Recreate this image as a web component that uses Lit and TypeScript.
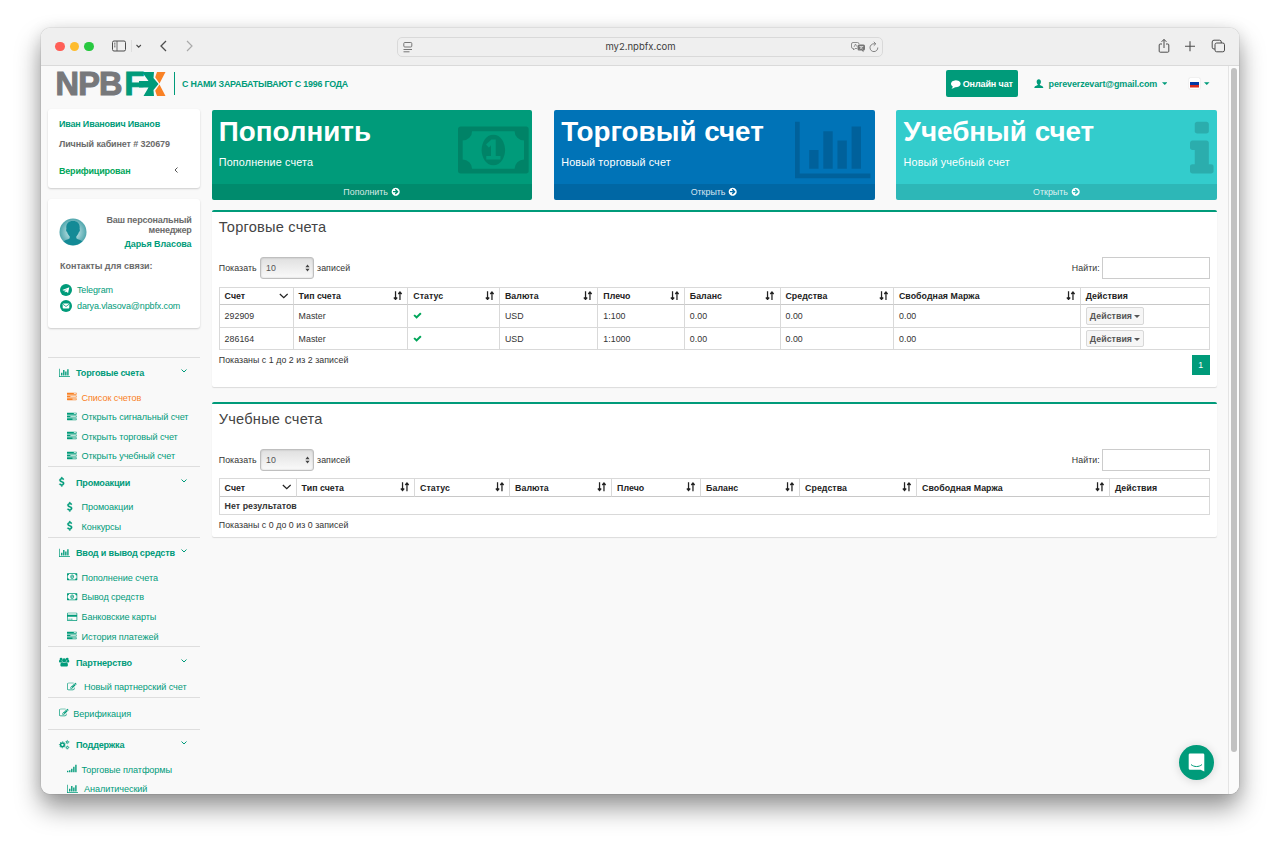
import { LitElement, html, css, svg } from "lit";
import { customElement, property } from "lit/decorators.js";

const rr = (x: number, top: number) => svg`<rect x=${x} y=${top} width="256" height=${1536 - top} rx="30"></rect>`;

/* name -> [viewBox width, drawing]; every glyph is 1792 units high */
const ICONS: Record<string, [number, unknown]> = {
  chart: [2048, svg`<path d="M640 896v512h-256v-512h256zm384-512v1024h-256v-1024h256zm1024 1152v128h-2048v-1536h128v1408h1920zm-640-896v768h-256v-768h256zm384-384v1152h-256v-1152h256z"></path>`],
  money: [1920, svg`<path d="M768 1152h384v-96h-128v-448h-114l-148 137 77 80q42-37 55-57h2v288h-128v96zm512-256q0 70-21 142t-59.5 134-101.5 101-138 39-138-39-101.5-101-59.5-134-21-142 21-142 59.5-134 101.5-101 138-39 138 39 101.5 101 59.5 134 21 142zm512 256v-512q-106 0-181-75t-75-181h-1152q0 106-75 181t-181 75v512q106 0 181 75t75 181h1152q0-106 75-181t181-75zm128-832v1152q0 26-19 45t-45 19h-1792q-26 0-45-19t-19-45v-1152q0-26 19-45t45-19h1792q26 0 45 19t19 45z"></path>`],
  info: [640, svg`<path d="M640 1344v128q0 26-19 45t-45 19h-512q-26 0-45-19t-19-45v-128q0-26 19-45t45-19h64v-384h-64q-26 0-45-19t-19-45v-128q0-26 19-45t45-19h384q26 0 45 19t19 45v576h64q26 0 45 19t19 45zm-128-1152v192q0 26-19 45t-45 19h-256q-26 0-45-19t-19-45v-192q0-26 19-45t45-19h256q26 0 45 19t19 45z"></path>`],
  tasks: [1792, svg`<path d="M1024 1408h640v-128h-640v128zm-384-512h1024v-128h-1024v128zm640-512h384v-128h-384v128zm512 832v256q0 26-19 45t-45 19h-1664q-26 0-45-19t-19-45v-256q0-26 19-45t45-19h1664q26 0 45 19t19 45zm0-512v256q0 26-19 45t-45 19h-1664q-26 0-45-19t-19-45v-256q0-26 19-45t45-19h1664q26 0 45 19t19 45zm0-512v256q0 26-19 45t-45 19h-1664q-26 0-45-19t-19-45v-256q0-26 19-45t45-19h1664q26 0 45 19t19 45z"></path>`],
  check: [1792, svg`<path d="M1671 566q0 40-28 68l-724 724-136 136q-28 28-68 28t-68-28l-136-136-362-362q-28-28-28-68t28-68l136-136q28-28 68-28t68 28l294 295 656-657q28-28 68-28t68 28l136 136q28 28 28 68z"></path>`],
  go: [1792, svg`<path d="M1413 896q0-27-18-45l-91-91-362-362q-18-18-45-18t-45 18l-91 91q-18 18-18 45t18 45l189 189h-502q-26 0-45 19t-19 45v128q0 26 19 45t45 19h502l-189 189q-19 19-19 45t19 45l91 91q18 18 45 18t45-18l362-362 91-91q18-18 18-45zm251 0q0 209-103 385.5t-279.5 279.5-385.5 103-385.5-103-279.5-279.5-103-385.5 103-385.5 279.5-279.5 385.5-103 385.5 103 279.5 279.5 103 385.5z"></path>`],
  comment: [1792, svg`<path d="M1792 896q0 174-120 321.5t-326 233-450 85.5q-70 0-145-8-198 175-460 242-49 14-114 22-17 2-30.5-9t-17.5-29v-1q-3-4-.5-12t2-10 4.5-9.5l6-9 7-8.5 8-9q7-8 31-34.5t34.5-38 31-39.5 32.5-51 27-59 26-76q-157-89-247.5-220t-90.5-281q0-130 71-248.5t191-204.5 286-136.5 348-50.5q244 0 450 85.5t326 233 120 321.5z"></path>`],
  edit: [1792, svg`<path d="M888 1184l116-116-152-152-116 116v56h96v96h56zm440-720q-16-16-33 1l-350 350q-17 17-1 33t33-1l350-350q17-17 1-33zm80 594v190q0 119-84.5 203.5t-203.5 84.5h-832q-119 0-203.5-84.5t-84.5-203.5v-832q0-119 84.5-203.5t203.5-84.5h832q63 0 117 25 15 7 18 23 3 17-9 29l-49 49q-14 14-32 8-23-6-45-6h-832q-66 0-113 47t-47 113v832q0 66 47 113t113 47h832q66 0 113-47t47-113v-126q0-13 9-22l64-64q15-15 35-7t20 29zm-96-738l288 288-672 672h-288v-288zm444 132l-92 92-288-288 92-92q28-28 68-28t68 28l152 152q28 28 28 68t-28 68z"></path>`],
  card: [1920, svg`<path d="M1760 128q66 0 113 47t47 113v1216q0 66-47 113t-113 47h-1600q-66 0-113-47t-47-113v-1216q0-66 47-113t113-47h1600zm-1600 128q-13 0-22.5 9.5t-9.5 22.5v224h1664v-224q0-13-9.5-22.5t-22.5-9.5h-1600zm1600 1280q13 0 22.5-9.5t9.5-22.5v-608h-1664v608q0 13 9.5 22.5t22.5 9.5h1600zm-1504-128v-128h256v128h-256zm384 0v-128h384v128h-384z"></path>`],
  signal: [1792, svg`${rr(0, 1280)}${rr(384, 1152)}${rr(768, 896)}${rr(1152, 512)}${rr(1536, 128)}`],
  usd: [1024, svg`<path d="M978 1185q0 153-99.5 263.5t-258.5 136.5v175q0 14-9 23t-23 9h-135q-13 0-22.5-9.5t-9.5-22.5v-175q-66-9-127.5-31t-101.5-44.5-74-48-46.5-37.5-17.5-18q-17-21-2-41l103-135q7-10 23-12 15-2 24 9l2 2q113 99 243 125 37 8 74 8 81 0 142.5-43t61.5-122q0-28-15-53t-33.5-42-58.5-37.5-66-32-80-32.5q-39-16-61.5-25t-61.5-26.5-62.5-31-56.5-35.5-53.5-42.5-43.5-49-35.5-58-21-66.5-8.5-78q0-138 98-242t255-134v-180q0-13 9.5-22.5t22.5-9.5h135q14 0 23 9t9 23v176q57 6 110.5 23t87 33.5 63.5 37.5 39 29 15 14q17 18 5 38l-81 146q-8 15-23 16-14 3-27-7-3-3-14.5-12t-39-26.5-58.5-32-74.5-26-85.5-11.5q-95 0-155 43t-60 111q0 26 8.5 48t29.5 41.5 39.5 33 56 31 60.5 27 70 27.5q53 20 81 31.5t76 35 75.5 42.5 62 50 53 63.5 31.5 76.5 13 94z" stroke="currentColor" stroke-width="60"></path>`],
  users: [1920, svg`<circle cx="384" cy="384" r="256"></circle><circle cx="1536" cy="384" r="256"></circle><circle cx="960" cy="640" r="384"></circle>
    <path d="M593 896q-162 5-265 128h-134q-82 0-138-40.500t-56-118.500q0-353 124-353 6 0 43.500 21t97.500 42.500 119 21.500q67 0 133-23-5 37-5 66 0 139 81 256zM1920 865q0 78-56 118.500t-138 40.500h-134q-103-123-265-128 81-117 81-256 0-29-5-66 66 23 133 23 59 0 119-21.500t97.500-42.500 43.500-21q124 0 124 353zM1664 1533q0 120-73 189.500t-194 69.500h-874q-121 0-194-69.500t-73-189.500q0-53 3.500-103.500t14-109 26.500-108.500 43-97.500 62-81 85.500-53.500 111.500-20q10 0 43 21.500t73 48 107 48 135 21.500 135-21.500 107-48 73-48 43-21.500q61 0 111.500 20t85.500 53.500 62 81 43 97.500 26.500 108.500 14 109 3.500 103.500z"></path>`],
  cogs: [1920, svg`<g fill="none" stroke="currentColor"><circle cx="640" cy="896" r="350" stroke-width="270"></circle><circle cx="640" cy="896" r="560" stroke-width="170" stroke-dasharray="220 219.800" stroke-dashoffset="110"></circle>
    <circle cx="1560" cy="384" r="185" stroke-width="170"></circle><circle cx="1560" cy="384" r="305" stroke-width="120" stroke-dasharray="140 179.400" stroke-dashoffset="65"></circle>
    <circle cx="1560" cy="1408" r="185" stroke-width="170"></circle><circle cx="1560" cy="1408" r="305" stroke-width="120" stroke-dasharray="140 179.400" stroke-dashoffset="65"></circle></g>`],
  user: [1792, svg`<path d="M896 60c250 0 400 180 400 440 0 230-90 400-200 500v130c30 90 560 130 600 360 20 90 30 140 30 200H66c0-60 10-110 30-200 40-230 570-270 600-360v-130c-110-100-200-270-200-500 0-260 150-440 400-440z"></path>`],
};

@customElement("fa-icon")
class FaIcon extends LitElement {
  @property() name = "";
  static styles = css`
    :host { display: inline-flex; height: 9.6px; flex: none; }
    svg { height: 100%; display: block; fill: currentColor; overflow: visible; }
  `;
  render() {
    const [w, g] = ICONS[this.name];
    return html`<svg viewBox="0 0 ${w} 1792">${g}</svg>`;
  }
}

interface Group { icon: string; title: string; items: [string, string, string?][]; }

const MENU: Group[] = [
  { icon: "chart", title: "Торговые счета", items: [["tasks", "Список счетов", "active"], ["tasks", "Открыть сигнальный счет"], ["tasks", "Открыть торговый счет"], ["tasks", "Открыть учебный счет"]] },
  { icon: "usd", title: "Промоакции", items: [["usd", "Промоакции"], ["usd", "Конкурсы"]] },
  { icon: "chart", title: "Ввод и вывод средств", items: [["money", "Пополнение счета"], ["money", "Вывод средств"], ["card", "Банковские карты"], ["tasks", "История платежей"]] },
  { icon: "users", title: "Партнерство", items: [["edit", "Новый партнерский счет", "wide"]] },
  { icon: "edit", title: "Верификация", items: [] },
  { icon: "cogs", title: "Поддержка", items: [["signal", "Торговые платформы"], ["chart", "Аналитический", "wide"]] },
];

@customElement("side-menu")
class SideMenu extends LitElement {
  static styles = css`
    :host { display: block; margin-top: 28.600px; color: #009b7a; font-size: 9.100px; }
    .group { border-top: 1px solid #dedede; padding-bottom: .8px; }
    .head { display: flex; align-items: center; box-sizing: border-box; height: 29.500px; padding: 1px 13px 0 10.500px; font-weight: bold; }
    .head .ic { width: 17.500px; display: flex; margin-top: -1px; }
    .head .t { flex: 1; letter-spacing: -.2px; white-space: nowrap; }
    .head svg { width: 6px; height: 4px; margin-top: -4px; }
    .head.plain { font-weight: normal; }
    .plain .ic { width: 14.800px; }
    .head.plain .t { letter-spacing: -.04px; }
    .item { display: flex; align-items: center; box-sizing: border-box; height: 19.600px; padding: 1.400px 0 0 18.500px; letter-spacing: -.07px; white-space: nowrap; }
    .item .ic { width: 15px; display: flex; margin-top: -1.200px; }
    .item.wide .ic { width: 17.500px; }
    .usd .ic { padding-left: .3px; box-sizing: border-box; }
    .active { color: #f98125; }
  `;
  render() {
    return MENU.map((g) => html`<div class="group">
      <div class="head ${g.items.length ? "" : "plain"}"><span class="ic"><fa-icon name=${g.icon}></fa-icon></span><span class="t">${g.title}</span>
        ${g.items.length ? html`<svg viewBox="0 0 6 4" fill="none" stroke="currentColor"><path d="M.5 .5L3 3L5.500 .5"></path></svg>` : ""}</div>
      ${g.items.map(([i, t, c]) => html`<div class="item ${c ?? ""} ${i}"><span class="ic"><fa-icon name=${i}></fa-icon></span><span>${t}</span></div>`)}
    </div>`);
  }
}

@customElement("account-box")
class AccountBox extends LitElement {
  @property() heading = "";
  @property() kind = "real";
  @property() summary = "";
  @property({ type: Array }) rows: string[][] = [];
  static styles = css`
    :host { display: block; box-sizing: border-box; background: #fff; border-top: 2px solid #009b7a; border-radius: 2px; box-shadow: 0 1px 1px rgba(0,0,0,.12); padding: 0 7.300px; color: #333; font-size: 8.800px; letter-spacing: .05px; }
    h3 { margin: 0; padding-top: 4px; height: 44.700px; box-sizing: border-box; font-size: 14.600px; line-height: 22px; font-weight: normal; letter-spacing: .22px; color: #444; }
    .bar { display: flex; align-items: center; height: 22px; margin-bottom: 7.500px; }
    .sel { width: 54.500px; height: 22px; box-sizing: border-box; margin: 0 3px 0 3px; border: 1px solid #bfbfbf; border-radius: 3px; background: linear-gradient(#e0e0e0, #fafafa); box-shadow: inset 0 0 2px rgba(0,0,0,.2); display: flex; align-items: center; justify-content: space-between; padding: 0 3.500px 0 5.500px; color: #555; }
    .sel svg { width: 5px; height: 8px; }
    .find { margin-left: auto; display: flex; align-items: center; gap: 2.500px; }
    .find i { width: 105.500px; height: 20px; border: 1px solid #ccc; background: #fff; }
    .grid { display: grid; border: 1px solid #d9d9d9; border-right: 0; border-bottom: 0; }
    .real { grid-template-columns: 74px 114.700px 91.700px 98.300px 86.500px 95.700px 113.500px 186.700px 1fr; }
    .demo { grid-template-columns: 77px 118.500px 95px 102px 89px 99px 117px 192.800px 1fr; }
    .c { box-sizing: border-box; height: 22.600px; border-right: 1px solid #d9d9d9; border-bottom: 1px solid #d9d9d9; padding: 0 4.800px; display: flex; align-items: center; justify-content: space-between; }
    .h { height: 18px; font-weight: bold; color: #222; border-bottom-color: #c8c8c8; }
    .real .h { height: 17.500px; }
    .h svg { width: 9.500px; height: 9.500px; flex: none; margin-top: -1px; }
    .all { grid-column: 1 / -1; height: 18px; font-weight: bold; }
    .ok { color: #00a65a; height: 9px; }
    .btn { display: flex; align-items: center; height: 15.500px; gap: 2px; padding: 0 3.200px; border: 1px solid #d8d8d8; border-radius: 2px; background: #f6f6f6; color: #555; font-weight: bold; }
    .btn svg { width: 6px; height: 3px; fill: currentColor; margin-top: 1px; }
    .foot { display: flex; justify-content: space-between; padding-top: 4.500px; line-height: 11px; }
    .page { width: 18px; height: 20px; line-height: 20px; background: #009b7a; color: #fff; text-align: center; margin-top: .5px; }
  `;
  private sort(first: boolean) {
    return first
      ? html`<svg viewBox="0 0 9 9" fill="none" stroke="currentColor" stroke-width="1.200"><path d="M.8 2.800L4.500 6.300L8.200 2.800"></path></svg>`
      : html`<svg viewBox="0 0 9 9" fill="none" stroke="currentColor" stroke-width="1.200"><path d="M2.400 .3V8M.8 6.200L2.400 8L4 6.200M6.600 8.700V1M5 2.800L6.600 1L8.200 2.800"></path></svg>`;
  }
  render() {
    const cols = ["Счет", "Тип счета", "Статус", "Валюта", "Плечо", "Баланс", "Средства", "Свободная Маржа", "Действия"];
    const real = this.kind === "real";
    return html`<h3>${this.heading}</h3>
      <div class="bar"><span>Показать</span><span class="sel">10<svg viewBox="0 0 5 8"><path fill="#444" d="M2.500 .4L4.600 3.300H.4zM2.500 7.600L4.600 4.700H.4z"></path></svg></span><span>записей</span>
        <span class="find">Найти:<i></i></span></div>
      <div class="grid ${this.kind}">
        ${cols.map((c, i) => html`<div class="c h"><span>${c}</span>${i < 8 ? this.sort(i === 0) : ""}</div>`)}
        ${real ? this.rows.map((r) => html`${r.map((v) => html`<div class="c">${v === "ok" ? html`<fa-icon class="ok" name="check"></fa-icon>` : html`<span>${v}</span>`}</div>`)}
          <div class="c"><span class="btn">Действия<svg viewBox="0 0 6 3"><path d="M0 0H6L3 3z"></path></svg></span></div>`)
        : html`<div class="c all">Нет результатов</div>`}
      </div>
      <div class="foot"><span>${this.summary}</span>${real ? html`<span class="page">1</span>` : ""}</div>`;
  }
}

@customElement("app-root")
class AppRoot extends LitElement {
  static styles = css`
    :host { display: block; width: 1280px; height: 848px; box-sizing: border-box; padding: 28px 41px 0; background: #fff; overflow: hidden; font-family: "Liberation Sans", Arial, sans-serif; }
    .win { width: 1198px; height: 766px; border-radius: 9px; box-shadow: 0 0 1px rgba(0,0,0,.55), 0 14px 26px rgba(0,0,0,.4), 0 2px 16px rgba(0,0,0,.1); }
    .clip { width: 100%; height: 100%; border-radius: 9px; overflow: hidden; background: #f9f9f9; display: flex; flex-direction: column; }
    .tool { height: 37px; box-sizing: content-box; flex: none; background: #efefef; border-bottom: 1px solid #dadada; display: flex; align-items: center; color: #4c4c4c; }
    .lights { display: flex; gap: 5px; margin-left: 14px; width: 56.500px; }
    .lights i { width: 9.500px; height: 9.500px; border-radius: 50%; background: #ff5f57; }
    .lights i:nth-child(2) { background: #febc2e; }
    .lights i:nth-child(3) { background: #28c840; }
    .nav { width: 83px; height: 16px; margin-top: -1px; }
    .url { margin-left: 202px; width: 476px; height: 18px; border: 1px solid #d9d9d9; border-radius: 5px; display: flex; align-items: center; justify-content: space-between; padding: 0 3px 0 5px; font-family: Inter, sans-serif; font-size: 9.500px; color: #3c3c3c; }
    .url .a { width: 10px; height: 12px; margin-right: 18px; }
    .url .b { width: 28px; height: 12px; }
    .right { margin-left: 275.500px; width: 68px; height: 16px; margin-top: -1px; }
    .page { display: flex; flex: 1; min-height: 0; }
    .view { flex: 1; overflow: hidden; min-width: 0; }
    .scroll { width: 10px; border-left: 1px solid #e4e4e4; background: #fbfbfb; display: flex; justify-content: center; padding-top: 2px; }
    .scroll i { width: 6px; height: 684px; border-radius: 3px; background: #c1c1c1; }
    header { display: flex; align-items: center; height: 35px; padding: 0 0 1px 14.500px; color: #009b7a; font-weight: bold; }
    .brand { display: flex; width: 110.500px; height: 30px; align-items: center; font-size: 32.500px; line-height: 30px; letter-spacing: -.8px; color: #77787b; -webkit-text-stroke: 1.100px currentColor; }
    .brand .n { width: 69px; }
    .brand .f { color: #009b7a; letter-spacing: 0; width: 17.500px; }
    .brand svg { width: 27px; height: 24px; margin-left: -3.500px; flex: none; }
    .tag { border-left: 1px solid #009b7a; margin-left: 7.500px; padding-left: 7.500px; height: 23px; line-height: 24px; font-size: 8.900px; letter-spacing: -.2px; white-space: nowrap; flex: 1; }
    .chat { display: flex; align-items: center; gap: 2.500px; width: 72.500px; height: 26.500px; box-sizing: border-box; justify-content: center; background: #009b7a; color: #fff; border-radius: 2px; font-size: 9px; letter-spacing: -.1px; white-space: nowrap; }
    .mail { display: flex; align-items: center; font-size: 9px; letter-spacing: -.14px; margin-left: 15.500px; width: 155px; gap: 5.500px; white-space: nowrap; }
    .caret { width: 5.500px; height: 3px; fill: currentColor; margin-left: -1px; }
    .lang { display: flex; align-items: center; gap: 5.500px; width: 39.500px; }
    .flag { width: 9px; height: 9px; padding: 1px; box-shadow: 0 0 1px #aaa; border-radius: 1px; background: #fff; }
    .body { display: flex; gap: 11.500px; padding: 7px 11px 0 7px; }
    aside { width: 152px; flex: none; }
    .panel { box-sizing: border-box; background: #fff; border-radius: 3px; box-shadow: 0 1px 2px rgba(0,0,0,.18); color: #6b6b6b; font-size: 9px; font-weight: bold; padding: 0 8.500px 0 11px; }
    .p1 { height: 79px; padding-top: 9px; line-height: 12px; }
    .p1 div { height: 19.500px; letter-spacing: -.12px; }
    .p1 .green, .p1 .ver { letter-spacing: -.19px; }
    .green { color: #009b7a; }
    .p1 .ver { color: #00a65a; display: flex; justify-content: space-between; padding: 8px 20px 0 0; margin-right: -6.500px; }
    .ver svg { width: 4px; height: 6px; margin-top: 2px; color: #555; }
    .p2 { height: 129px; margin-top: 11px; padding-top: 16px; letter-spacing: -.01px; }
    .who { display: flex; justify-content: space-between; align-items: center; height: 34px; text-align: right; line-height: 10.300px; letter-spacing: -.2px; }
    .who .green { display: block; margin-top: 2.800px; letter-spacing: -.1px; }
    .who svg { width: 28px; height: 28px; }
    .via { margin: 11.500px 0 11.300px 1px; line-height: 11px; }
    .link { display: flex; align-items: center; height: 15.400px; gap: 5.500px; color: #009b7a; font-weight: normal; letter-spacing: -.13px; margin-left: .5px; }
    .link svg { width: 12px; height: 12px; }
    main { flex: 1; min-width: 0; }
    .tiles { display: grid; grid-template-columns: repeat(3, 320.700px); justify-content: space-between; margin-bottom: 10.300px; margin-top: .5px; }
    .tile { height: 90.700px; border-radius: 2px; overflow: hidden; color: #fff; display: flex; flex-direction: column; position: relative; background: #009b7a; }
    .tile.b { background: #0073b7; }
    .tile.c { background: #33cccc; }
    .tile h2 { margin: 0; padding: 7px 0 0 7.300px; font-size: 27.800px; line-height: 30px; height: 32px; letter-spacing: 0; white-space: nowrap; }
    .tile p { margin: 0; padding: 7px 0 0 7.300px; font-size: 10.800px; line-height: 13px; flex: 1; letter-spacing: .14px; }
    .tile .big { position: absolute; right: 3.700px; top: 7px; height: 66px; color: rgba(0,0,0,.15); }
    .more { height: 16.500px; background: rgba(0,0,0,.1); display: flex; align-items: center; justify-content: center; gap: 3px; font-size: 8.900px; color: rgba(255,255,255,.85); position: relative; }
    .more fa-icon { color: #fff; height: 9.400px; margin-top: -.5px; }
    .x1 { height: 177px; }
    .x2 { height: 135.500px; margin-top: 14.500px; }
    .bubble { position: absolute; left: 1179px; top: 745px; width: 35px; height: 35px; border-radius: 50%; background: #009b7a; box-shadow: 0 1px 10px rgba(0,0,0,.15); display: flex; align-items: center; justify-content: center; }
    .bubble svg { width: 17px; height: 19px; }
  `;
  private tile(k: string, t: string, p: string, more: string, icon: string) {
    return html`<section class="tile ${k}"><h2>${t}</h2><p>${p}</p><fa-icon class="big" name=${icon}></fa-icon><div class="more">${more}<fa-icon name="go"></fa-icon></div></section>`;
  }
  render() {
    const caret = html`<svg class="caret" viewBox="0 0 6 3"><path d="M0 0H6L3 3z"></path></svg>`;
    return html`<div class="win"><div class="clip">
      <div class="tool">
        <div class="lights"><i></i><i></i><i></i></div>
        <svg class="nav" viewBox="0 0 83 16" fill="none" stroke="currentColor"><rect x=".5" y="3" width="13" height="10" rx="1.500"></rect><path d="M5 3V13M2 5.200H3.500M2 7H3.500M2 8.800H3.500" stroke-width=".8"></path><path d="M19.500 2V14" stroke="#dedede"></path><path d="M24.500 7L26.700 9.200L28.900 7" stroke-width="1.100"></path><path d="M54 3L49 8L54 13" stroke-width="1.300"></path><path d="M75 3L80 8L75 13" stroke="#aaa" stroke-width="1.200"></path></svg>
        <div class="url"><svg class="a" viewBox="0 0 10 12" fill="none" stroke="#777"><rect x=".8" y="1.500" width="8" height="4.500" rx="1"></rect><path d="M.5 8.500H9M.5 10.800H6.500"></path></svg><span>my2.npbfx.com</span>
          <svg class="b" viewBox="0 0 28 12" fill="none" stroke="#777"><path d="M6 7.500H4L2.500 9V7.500H2A1.500 1.500 0 0 1 .5 6V3A1.500 1.500 0 0 1 2 1.500H6.500A1.500 1.500 0 0 1 8 3" stroke-width=".8"></path><path d="M3 6L4.500 3L5.700 5.500" stroke-width=".7"></path><path d="M8 3.500H12.500A1.500 1.500 0 0 1 14 5V8A1.500 1.500 0 0 1 12.500 9.500V11.300L10.700 9.500H8A1.500 1.500 0 0 1 6.500 8V5A1.500 1.500 0 0 1 8 3.500z" fill="#777" stroke="none"></path><path d="M8.500 5.500H12.200M9 8.200L11.700 5.500M9 5.700L11.700 8.200" stroke="#efefef" stroke-width=".7"></path><path d="M26.800 6.500A3.900 3.900 0 1 1 23 2.800H24.600M22.800 .8L24.800 2.800L22.800 4.700" stroke-width=".9"></path></svg></div>
        <svg class="right" viewBox="0 0 68 16" fill="none" stroke="currentColor"><path d="M4 6H2.200A1 1 0 0 0 1.200 7V13.200A1 1 0 0 0 2.200 14.200H9.800A1 1 0 0 0 10.800 13.200V7A1 1 0 0 0 9.800 6H8M6 10V1.500M3.600 3.800L6 1.400L8.400 3.800"></path><path d="M27 8.200H37M32 3.200V13.200" stroke-width="1.100"></path><rect x="57" y="5" width="9.500" height="8.800" rx="1.700"></rect><path d="M57 11H56A1.800 1.800 0 0 1 54.200 9.200V4A1.800 1.800 0 0 1 56 2.200H61.500A1.800 1.800 0 0 1 63.300 4V5"></path></svg>
      </div>
      <div class="page"><div class="view">
        <header>
          <div class="brand"><span class="n">NPB</span><span class="f">F</span><svg viewBox="0 0 27 24"><path fill="#009b7a" d="M3 0H15L14.500 6L19.500 12L14.500 18L15 24H4.500L9.500 15.500H0V9H9.500z"></path><path fill="#f98125" d="M26.500 0H18L16.200 5.200L20.500 11.500zM26.500 24H18L16.200 18.800L20.500 12.500z"></path></svg></div>
          <div class="tag">С НАМИ ЗАРАБАТЫВАЮТ С 1996 ГОДА</div>
          <div class="chat"><fa-icon name="comment"></fa-icon>Онлайн чат</div>
          <div class="mail"><fa-icon name="user"></fa-icon><span>pereverzevart@gmail.com</span>${caret}</div>
          <div class="lang"><svg class="flag" viewBox="0 0 9 9"><path fill="#fff" d="M0 1H9V4H0z"></path><path fill="#0039a6" d="M0 3H9V6H0z"></path><path fill="#d52b1e" d="M0 6H9V8.500H0z"></path></svg>${caret}</div>
        </header>
        <div class="body">
          <aside>
            <div class="panel p1"><div class="green">Иван Иванович Иванов</div><div>Личный кабинет # 320679</div><div class="ver">Верифицирован<svg viewBox="0 0 4 6" fill="none" stroke="currentColor"><path d="M3.500 .5L1 3L3.500 5.500"></path></svg></div></div>
            <div class="panel p2">
              <div class="who"><svg viewBox="0 0 28 28"><defs><radialGradient id="g"><stop offset=".3" stop-color="#b5dde0"></stop><stop offset="1" stop-color="#4fa6ad"></stop></radialGradient></defs><circle cx="14" cy="14" r="13.500" fill="url(#g)"></circle><path fill="#138a96" d="M14 3C19 3 21.300 6.300 20.600 11C21.300 12 20.700 13.800 19.800 14.300C19.200 16.500 18 17.600 17.300 18.500V20.300C19 21.800 22 22 23.300 23.500A13.500 13.500 0 0 1 4.700 23.500C6 22 9 21.800 10.700 20.300V18.500C10 17.600 8.800 16.500 8.200 14.300C7.300 13.800 6.700 12 7.400 11C6.700 6.300 9 3 14 3z"></path></svg>
                <div>Ваш персональный<br>менеджер<span class="green">Дарья Власова</span></div></div>
              <div class="via">Контакты для связи:</div>
              <div class="link"><svg viewBox="0 0 12 12"><circle cx="6" cy="6" r="6" fill="#009b7a"></circle><path fill="#fff" d="M2.300 6L9.300 3.200L8.100 9L5.900 7.500L4.900 8.600L4.700 6.900L7.500 4.700L4.100 6.700z"></path></svg>Telegram</div>
              <div class="link"><svg viewBox="0 0 12 12"><circle cx="6" cy="6" r="6" fill="#009b7a"></circle><rect x="2.700" y="3.500" width="6.600" height="5" rx=".8" fill="#fff"></rect><path d="M3 4.300L6 6.500L9 4.300" fill="none" stroke="#009b7a" stroke-width=".8"></path></svg>darya.vlasova@npbfx.com</div>
            </div>
            <side-menu></side-menu>
          </aside>
          <main>
            <div class="tiles">
              ${this.tile("a", "Пополнить", "Пополнение счета", "Пополнить", "money")}
              ${this.tile("b", "Торговый счет", "Новый торговый счет", "Открыть", "chart")}
              ${this.tile("c", "Учебный счет", "Новый учебный счет", "Открыть", "info")}
            </div>
            <account-box class="x1" heading="Торговые счета" kind="real" summary="Показаны с 1 до 2 из 2 записей"
              .rows=${[["292909", "Master", "ok", "USD", "1:100", "0.00", "0.00", "0.00"], ["286164", "Master", "ok", "USD", "1:1000", "0.00", "0.00", "0.00"]]}></account-box>
            <account-box class="x2" heading="Учебные счета" kind="demo" summary="Показаны с 0 до 0 из 0 записей"></account-box>
          </main>
        </div>
      </div><div class="scroll"><i></i></div></div>
      <div class="bubble"><svg viewBox="0 0 17 19"><path fill="#fff" d="M2 .5H15A1.300 1.300 0 0 1 16.300 1.800V18.500L12.500 16.700H2A1.300 1.300 0 0 1 .7 15.400V1.800A1.300 1.300 0 0 1 2 .5z"></path><path d="M3.300 11.800C6 14.200 11 14.200 13.700 11.800" fill="none" stroke="#009b7a" stroke-linecap="round"></path></svg></div>
    </div></div>`;
  }
}
